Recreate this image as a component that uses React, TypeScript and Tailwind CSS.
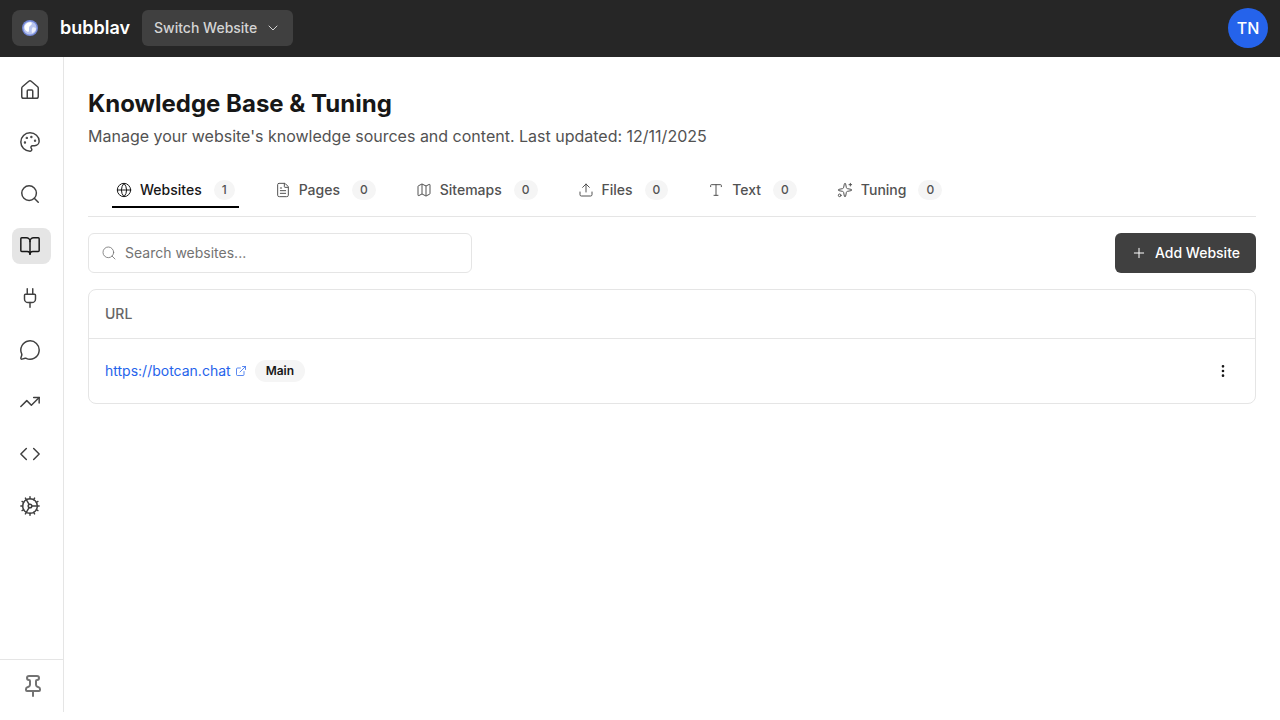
import React from 'react';
import {
  BookOpen,
  ChevronDown,
  Code,
  Cog,
  EllipsisVertical,
  ExternalLink,
  FileText,
  Globe,
  House,
  Map as MapIcon,
  MessageCircle,
  Palette,
  Pin,
  Plug,
  Plus,
  Search,
  Sparkles,
  TrendingUp,
  Type,
  Upload,
} from 'lucide-react';

const navItems = [
  { icon: House },
  { icon: Palette },
  { icon: Search },
  { icon: BookOpen, active: true },
  { icon: Plug },
  { icon: MessageCircle },
  { icon: TrendingUp },
  { icon: Code },
  { icon: Cog },
];

const tabs = [
  { label: 'Websites', count: 1, icon: Globe, active: true },
  { label: 'Pages', count: 0, icon: FileText },
  { label: 'Sitemaps', count: 0, icon: MapIcon },
  { label: 'Files', count: 0, icon: Upload },
  { label: 'Text', count: 0, icon: Type },
  { label: 'Tuning', count: 0, icon: Sparkles },
];

const Logo = () => (
  <svg width="18" height="18" viewBox="0 0 18 18">
    <circle cx="9" cy="9" r="8" fill="#7488d8" />
    <circle cx="9" cy="9" r="6.6" fill="#b9c5ee" />
    <path d="M3.5 7c1.5-3.5 5-4.5 7-3.5 1 2-1 3-2 4s0 3.500-1 5.500C5 12.500 3 10 3.500 7z" fill="#ffffff" />
    <path d="M11.500 8.500c2-.5 3 .5 3.500 1.500-.5 2-2 3.500-4 4-.5-2-.5-3.500.5-5.500z" fill="#eef1fb" />
  </svg>
);

export default function App() {
  return (
    <div className="h-[720px] w-[1280px] overflow-hidden flex flex-col bg-white font-['Inter',sans-serif]">
      <header className="h-[57px] shrink-0 bg-[#262626] flex items-center justify-between px-3 pb-px">
        <div className="flex items-center">
          <div className="w-9 h-9 rounded-lg bg-[#404040] flex items-center justify-center">
            <Logo />
          </div>
          <span className="ml-3 text-white text-lg leading-7 font-semibold">bubblav</span>
          <button className="ml-3 h-9 px-3 rounded-md bg-[#404040] flex items-center text-sm font-medium text-[#d4d4d4]">
            Switch Website
            <ChevronDown className="ml-2 w-4 h-4" strokeWidth={1.5} />
          </button>
        </div>
        <div className="w-10 h-10 rounded-full bg-[#2563eb] text-white flex items-center justify-center font-medium">
          TN
        </div>
      </header>

      <div className="flex flex-1 min-h-0">
        <aside className="w-16 h-[655px] shrink-0 border-r border-[#e5e5e5] flex flex-col">
          <nav className="flex-1 flex flex-col gap-4 pt-[15px] pl-3">
            {navItems.map((item, i) => {
              const Icon = item.icon;
              return (
                <div
                  key={i}
                  className={`w-[39px] h-9 rounded-lg flex items-center pl-[7px] ${
                    item.active ? 'bg-[#e5e5e5] text-[#171717]' : 'text-[#404040]'
                  }`}
                >
                  <Icon size={22} strokeWidth={1.6} />
                </div>
              );
            })}
          </nav>
          <div className="h-[53px] border-t border-[#e5e5e5] flex items-center justify-center pl-[3px] text-[#737373]">
            <Pin size={24} strokeWidth={2} />
          </div>
        </aside>

        <main className="flex-1 min-w-0 pt-8 px-6">
          <h1 className="text-2xl leading-[30px] font-bold text-[#171717]">Knowledge Base &amp; Tuning</h1>
          <p className="mt-[5px] text-base leading-6 text-[#525252]">
            Manage your website's knowledge sources and content. Last updated: 12/11/2025
          </p>

          <div className="mt-[15px] pt-[9px] pb-2 border-b border-[#e5e5e5] flex gap-8 pl-6">
            {tabs.map((tab) => {
              const Icon = tab.icon;
              return (
                <div
                  key={tab.label}
                  className={`h-9 px-1 pt-[2px] flex items-center border-b-2 ${
                    tab.active ? 'border-black text-[#171717]' : 'border-transparent text-[#525252]'
                  }`}
                >
                  <Icon size={16} strokeWidth={1.5} />
                  <span className="ml-2 text-sm font-medium">{tab.label}</span>
                  <span className="ml-3 min-w-5 h-5 px-2 rounded-full bg-[#f5f5f5] text-xs text-[#525252] font-medium flex items-center justify-center">
                    {tab.count}
                  </span>
                </div>
              );
            })}
          </div>

          <div className="mt-4 flex items-center justify-between">
            <div className="w-96 h-10 rounded-md border border-[#e5e5e5] flex items-center pl-3">
              <Search size={16} strokeWidth={1.25} className="text-[#737373]" />
              <span className="ml-2 text-sm text-[#737373]">Search websites...</span>
            </div>
            <button className="h-10 px-4 rounded-md bg-[#404040] text-white text-sm font-medium flex items-center">
              <Plus size={16} strokeWidth={1.5} className="mr-2" />
              Add Website
            </button>
          </div>

          <div className="mt-4 rounded-lg border border-[#e5e5e5]">
            <div className="h-[49px] px-4 flex items-center border-b border-[#e5e5e5] text-sm font-medium text-[#666666]">URL</div>
            <div className="h-16 pl-4 pr-6 flex items-center justify-between">
              <div className="flex items-center">
                <a className="text-sm text-[#2563eb]">https://botcan.chat</a>
                <ExternalLink size={12} strokeWidth={1.5} className="ml-1 text-[#2563eb]" />
                <span className="ml-2 h-[22px] px-[11px] rounded-full bg-[#f5f5f5] text-xs font-semibold text-[#171717] flex items-center">Main</span>
              </div>
              <EllipsisVertical size={16} strokeWidth={2} className="text-[#171717]" />
            </div>
          </div>
        </main>
      </div>
    </div>
  );
}
